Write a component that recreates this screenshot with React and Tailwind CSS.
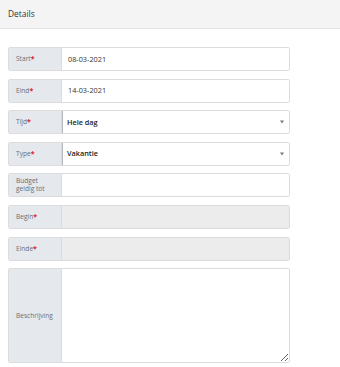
import React from "react";

const font = { fontFamily: '"Open Sans", "Noto Sans", sans-serif' };

function Label({ children, req }) {
  return (
    <div className="w-[53px] shrink-0 bg-[#e5e8ed] border-r border-[#d9dce1] flex items-center pl-[7px] pr-[4px] text-[6.6px] leading-[8px] text-[#6b6f75]">
      <span>
        {children}
        {req && <span className="text-[#e0202a] text-[7px] font-bold">*</span>}
      </span>
    </div>
  );
}

function Row({ label, req, value, disabled, select, h = "h-[24px]" }) {
  return (
    <div className={`flex ${h} rounded-[2px] border border-[#dcdcdc] overflow-hidden`}>
      <Label req={req}>{label}</Label>
      <div
        className={`flex-1 flex items-center ${
          disabled ? "bg-[#ececec]" : "bg-white"
        } ${select ? "border-l border-[#b8b8b8] pl-[4px] font-semibold text-[#222]" : "pl-[6px] text-[#333]"} text-[7.3px] relative`}
      >
        {value}
        {select && (
          <span className="absolute right-[5px] top-1/2 -translate-y-1/2 w-0 h-0 border-l-[2px] border-r-[2px] border-t-[3px] border-l-transparent border-r-transparent border-t-[#777]"></span>
        )}
      </div>
    </div>
  );
}

export default function App() {
  return (
    <div className="w-[340px] h-[367px] bg-white overflow-hidden" style={font}>
      <div className="h-[29px] bg-[#f4f4f4] border-b border-[#e2e2e2] flex items-center pl-[8px] text-[8.4px] text-[#333]">
        Details
      </div>
      <div className="mt-[18px] ml-[8px] w-[282px] flex flex-col gap-[7.6px]">
        <Row label="Start" req value="08-03-2021" />
        <Row label="Eind" req value="14-03-2021" />
        <Row label="Tijd" req value="Hele dag" select />
        <Row label="Type" req value="Vakantie" select />
        <Row label={<>Budget<br />geldig tot</>} />
        <Row label="Begin" req disabled />
        <Row label="Einde" req disabled />
        <div className="flex h-[95px] rounded-[2px] border border-[#dcdcdc] overflow-hidden">
          <Label>Beschrijving</Label>
          <textarea className="flex-1 bg-white outline-none resize-y text-[7.3px] p-[4px]" />
        </div>
      </div>
    </div>
  );
}
